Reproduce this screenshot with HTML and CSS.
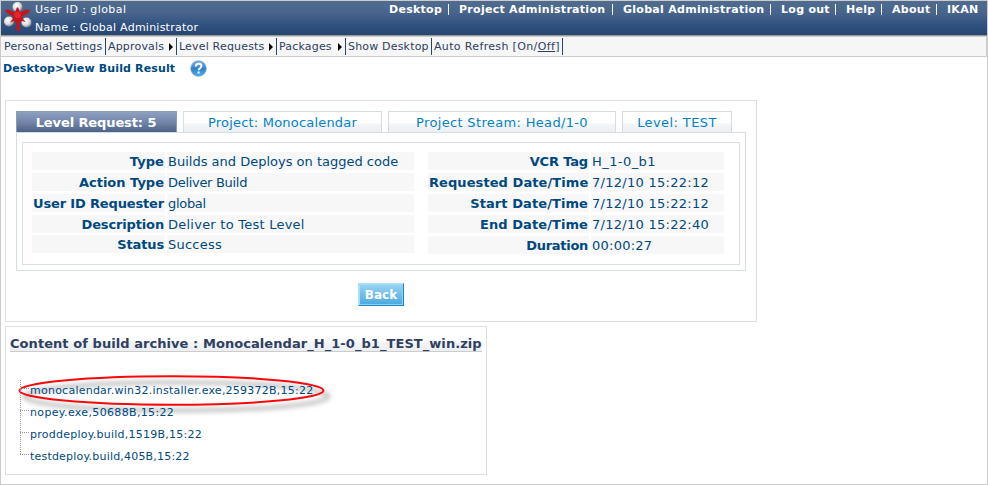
FILE: index.html
```html
<!DOCTYPE html>
<html lang="en">
<head>
<meta charset="utf-8">
<title>View Build Result</title>
<link rel="stylesheet" href="styles.css">
</head>
<body>
<div class="page">
  <header class="header">
    <svg class="logo" width="33" height="33" viewBox="0 0 33 33">
      <defs>
        <radialGradient id="ball" cx=".4" cy=".35" r=".65"><stop offset="0" stop-color="#fff"/><stop offset=".6" stop-color="#dcdcdc"/><stop offset="1" stop-color="#858990"/></radialGradient>
      </defs>
      <circle cx="16.500" cy="6" r="5" fill="url(#ball)"/>
      <circle cx="8" cy="20.500" r="5" fill="url(#ball)"/>
      <circle cx="25.500" cy="21.500" r="5" fill="url(#ball)"/>
      <path d="M3.500 9l4-.5 6.500 3 1.800-5h1.400l1.800 5 6-3 4 .5-1.500 3-6.500 3.500 1 2.500 3 3-4-1-2 1-.5 5 1 1.500-2.500 3.500-2.500-3.500 1-1.500-.5-5-2-1-4 1.500 2.500-3.500 1-2.500-6.500-3.500z" fill="#c4141c"/>
      <circle cx="16.500" cy="14" r="3.200" fill="#e8252b"/>
    </svg>
    <div class="user">
      <div class="s43">User ID : global</div>
      <div class="s24">Name : Global Administrator</div>
    </div>
    <nav class="topnav">
      <a>Desktop</a><i></i><a>Project Administration</a><i></i><a>Global Administration</a><i></i><a>Log out</a><i></i><a>Help</a><i></i><a>About</a><i></i><a>IKAN</a>
    </nav>
  </header>
  <nav class="menubar">
    <div class="m1"><span>Personal Settings</span></div>
    <div class="m2"><span>Approvals</span><b class="arrow"></b></div>
    <div class="m3"><span>Level Requests</span><b class="arrow"></b></div>
    <div class="m4"><span>Packages</span><b class="arrow"></b></div>
    <div class="m5"><span>Show Desktop</span></div>
    <div class="m6"><span>Auto Refresh [On/<u>Off</u>]</span></div>
  </nav>
  <div class="crumbs">
    <span>Desktop&gt;View Build Result</span>
    <svg class="help" width="17" height="17" viewBox="0 0 17 17">
      <defs><linearGradient id="hg" x1="0" y1="0" x2="0" y2="1"><stop offset="0" stop-color="#7db8ea"/><stop offset=".5" stop-color="#2f80cc"/><stop offset="1" stop-color="#48b4f0"/></linearGradient></defs>
      <circle cx="8.500" cy="8.500" r="7.700" fill="url(#hg)" stroke="#5f93c6" stroke-width=".8"/>
      <path d="M5.800 6.500q0-2.700 2.800-2.700t2.800 2.300q0 1.300-1.500 2.200-1.300.7-1.300 2" fill="none" stroke="#fff" stroke-width="1.900"/>
      <rect x="7.600" y="11.500" width="2" height="2" fill="#fff"/>
    </svg>
  </div>

  <section class="panel result">
    <div class="tabs">
      <div class="tab active t1"><span>Level Request: 5</span></div>
      <div class="tab t2"><span>Project: Monocalendar</span></div>
      <div class="tab t3"><span>Project Stream: Head/1-0</span></div>
      <div class="tab t4"><span>Level: TEST</span></div>
    </div>
    <div class="content">
      <div class="details">
        <dl class="left">
          <dt class="wide">Type</dt><dd>Builds and Deploys on tagged code</dd>
          <dt>Action Type</dt><dd class="tight">Deliver Build</dd>
          <dt class="narrow">User ID Requester</dt><dd class="tight">global</dd>
          <dt class="narrow">Description</dt><dd class="s24">Deliver to Test Level</dd>
          <dt class="narrow last">Status</dt><dd class="s24 last">Success</dd>
        </dl>
        <dl class="right">
          <dt class="narrow">VCR Tag</dt><dd class="s43">H_1-0_b1</dd>
          <dt class="wide">Requested Date/Time</dt><dd class="s28">7/12/10 15:22:12</dd>
          <dt class="wide">Start Date/Time</dt><dd class="s28">7/12/10 15:22:12</dd>
          <dt class="wide">End Date/Time</dt><dd class="s28">7/12/10 15:22:40</dd>
          <dt class="narrower">Duration</dt><dd class="s24">00:00:27</dd>
        </dl>
      </div>
    </div>
    <button class="back">Back</button>
  </section>

  <section class="panel archive">
    <h2>Content of build archive : Monocalendar_H_1-0_b1_TEST_win.zip</h2>
    <svg class="mark" width="330" height="50" viewBox="0 0 330 50">
      <defs><filter id="sh" x="-5%" y="-30%" width="112%" height="170%"><feGaussianBlur stdDeviation="2"/></filter></defs>
      <ellipse cx="161.500" cy="26.500" rx="152" ry="14" fill="none" stroke="#000" stroke-opacity=".2" stroke-width="5" filter="url(#sh)"/>
      <ellipse cx="156.500" cy="20.500" rx="152" ry="14.300" fill="none" stroke="#f80808" stroke-width="2"/>
    </svg>
    <ul class="tree">
      <li class="s24">monocalendar.win32.installer.exe,259372B,15:22</li>
      <li class="s34">nopey.exe,50688B,15:22</li>
      <li class="s24">proddeploy.build,1519B,15:22</li>
      <li class="s17">testdeploy.build,405B,15:22</li>
    </ul>
  </section>
</div>
</body>
</html>
```
FILE: styles.css
```css
* { box-sizing: border-box; }
body {
  margin: 0;
  background: #fff;
  color: #00497f;
  font: 11px/14px "DejaVu Sans", sans-serif;
}
.page { width: 988px; height: 485px; border: 1px solid #ccc; white-space: nowrap; }

.s17 { letter-spacing: .2px; }
.s24 { letter-spacing: .24px; }
.s28 { letter-spacing: .28px; }
.s34 { letter-spacing: .34px; }
.s43 { letter-spacing: .43px; }
.tight { letter-spacing: -.3px; }
.narrow { letter-spacing: -.15px; }
.narrower { letter-spacing: -.3px; }
.wide { letter-spacing: .08px; }

.header {
  display: flex;
  height: 35px;
  background: linear-gradient(#4f6c8f, #48648c 35%, #2d4f7e 75%, #27466f);
  border-bottom: 1px solid #999;
  color: #fff;
}
.logo { flex: none; }
.user { padding-left: 1px; line-height: 18px; }
.topnav {
  display: grid;
  grid-template-columns: 59px 11px 153px 11px 147px 11px 54px 11px 35px 11px 44px 11px 31px;
  margin-left: auto;
  padding-right: 9px;
  font-weight: bold;
  line-height: 17px;
  letter-spacing: .28px;
}
.topnav i { width: 1px; height: 11px; margin-top: 3px; background: #fff; }

.menubar {
  display: flex;
  height: 21px;
  padding-top: 1px;
  background: #f6f6f6;
  border: solid #ccc;
  border-width: 1px 1px 1px 0;
  color: #2e405f;
  letter-spacing: .18px;
}
.menubar div { display: flex; height: 17px; line-height: 18px; border-right: 1px solid #27466f; padding-left: 2px; }
.menubar .arrow { margin: 5px 3px 0 auto; width: 0; height: 0; border: solid transparent; border-width: 4px 0 4px 4px; border-left-color: #000; }
.menubar .m1 { width: 105px; padding-left: 3px; }
.m2 { width: 71px; } .m3 { width: 100px; } .m4 { width: 69px; } .m5 { width: 86px; }
.m6 { width: 131px; letter-spacing: .35px; }

.crumbs { display: flex; height: 43px; padding: 3px 0 0 2px; font-weight: bold; line-height: 17px; letter-spacing: .14px; }
.help { margin-left: 15px; }

.panel { border: 1px solid #dcdfdf; margin-left: 4px; background: #fff; }
.result { width: 752px; height: 222px; padding: 10px; }
.tabs { display: flex; gap: 6px; height: 21px; font-size: 13px; line-height: 22px; }
.tab { border: 1px solid #d5dede; border-bottom: 0; text-align: center; color: #0082c8; background: linear-gradient(#fff 55%, #f3f5f7 60%, #eceff3); }
.tab.active { border-color: #8a9cba; color: #fff; font-weight: bold; letter-spacing: -.1px; padding-right: 1px; background: linear-gradient(#8da0bf, #7386aa 50%, #4c6289); }
.t1 { width: 161px; }
.t2 { width: 199px; letter-spacing: .2px; }
.t3 { width: 228px; letter-spacing: .34px; }
.t4 { width: 110px; letter-spacing: .4px; }
.content { width: 730px; height: 139px; padding: 9px 5px; border: 1px solid #d5dede; }
.details { display: flex; width: 718px; height: 123px; padding: 9px; border: 1px solid #dcdfdf; }
dl { display: grid; gap: 3px 2px; margin: 0; height: 102px; font-size: 13px; line-height: 19px; grid-auto-rows: 18px; }
dt, dd { margin: 0; background: #f7f7f7; padding: 0 1px; }
dt { font-weight: bold; text-align: right; }
.last { margin: -1px 0 1px; }
.left { grid-template-columns: 133px 247px; margin-right: 14px; }
.right { grid-template-columns: 161px 133px; }
.back {
  display: block;
  width: 46px;
  height: 23px;
  margin: 12px 0 0 342px;
  padding: 0;
  border: 1px solid;
  border-color: #a8e6f6 #1d86c8 #1d86c8 #a8e6f6;
  box-shadow: inset 1px 1px #a4dcf6, inset -1px -1px #8ccdf2;
  background: linear-gradient(#9bd4f6, #4aa8de);
  color: #fff;
  font: bold 12px/20px "DejaVu Sans", sans-serif;
}

.archive { position: relative; width: 482px; height: 149px; margin-top: 4px; padding: 9px 4px; }
h2 {
  width: 472px;
  height: 16px;
  margin: 0;
  border-bottom: 1px solid #ccc;
  background: linear-gradient(#fff 30%, #f3f3f5 50%, #eceef0);
  color: #2e405f;
  font-size: 13px;
  line-height: 16px;
  letter-spacing: .06px;
}
.tree { position: relative; list-style: none; margin: 28px 0 0 10px; padding: 0; }
.tree li { position: relative; height: 22px; padding-left: 10px; line-height: 22px; }
.tree li::before {
  content: "";
  position: absolute;
  left: 0;
  top: -13px;
  width: 9px;
  height: 22px;
  background:
    repeating-linear-gradient(#999 0 1px, transparent 1px 2px) 0 0 / 1px 100% no-repeat,
    repeating-linear-gradient(90deg, #999 0 1px, transparent 1px 2px) 0 100% / 100% 1px no-repeat;
}
.tree li:first-child::before { top: 0; height: 9px; }
.mark { position: absolute; left: 9px; top: 43px; }
```
